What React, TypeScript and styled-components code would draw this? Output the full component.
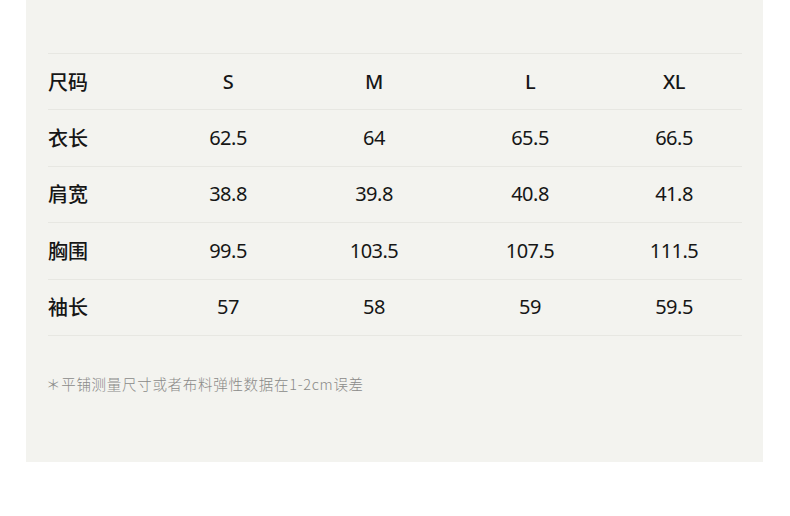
import styled, { createGlobalStyle } from 'styled-components';

const sizes = ['S', 'M', 'L', 'XL'];

const rows: { label: string; values: string[] }[] = [
  { label: '衣长', values: ['62.5', '64', '65.5', '66.5'] },
  { label: '肩宽', values: ['38.8', '39.8', '40.8', '41.8'] },
  { label: '胸围', values: ['99.5', '103.5', '107.5', '111.5'] },
  { label: '袖长', values: ['57', '58', '59', '59.5'] },
];

export default function App() {
  return (
    <>
      <GlobalStyle />
      <Panel>
        <Table>
          <Row>
            <Label>尺码</Label>
            {sizes.map(s => (
              <Cell key={s} $head>{s}</Cell>
            ))}
          </Row>
          {rows.map(r => (
            <Row key={r.label}>
              <Label>{r.label}</Label>
              {r.values.map((v, i) => (
                <Cell key={i}>{v}</Cell>
              ))}
            </Row>
          ))}
        </Table>
        <Note>＊平铺测量尺寸或者布料弹性数据在1-2cm误差</Note>
      </Panel>
    </>
  );
}

const GlobalStyle = createGlobalStyle`
  body {
    margin: 0;
    background: #ffffff;
    font-family: "Noto Sans", "Noto Sans CJK SC", sans-serif;
  }
`;

const Panel = styled.div`
  margin-left: 26px;
  width: 737px;
  height: 462px;
  box-sizing: border-box;
  padding: 53px 0 0 22px;
  background: #f3f3ef;
`;

const Table = styled.div`
  width: 694px;
  border-top: 1px solid #e7e7e2;
`;

const Row = styled.div`
  display: grid;
  grid-template-columns: 120px 120px 172px 140px 148px;
  align-items: center;
  height: 55.4px;
  border-bottom: 1px solid #e7e7e2;
`;

const Label = styled.div`
  font-family: "Noto Sans CJK SC", sans-serif;
  font-size: 20px;
  font-weight: 500;
  color: #161616;
  line-height: 1;
`;

const Cell = styled.div<{ $head?: boolean }>`
  text-align: center;
  font-family: "Noto Sans", sans-serif;
  font-size: 20px;
  font-weight: ${({ $head }) => ($head ? 500 : 400)};
  letter-spacing: -0.5px;
  color: #161616;
  line-height: 1;
`;

const Note = styled.div`
  margin-top: 38px;
  margin-left: -2px;
  font-family: "Noto Sans CJK SC", sans-serif;
  font-size: 14.5px;
  font-weight: 300;
  letter-spacing: 0.7px;
  color: #8a8a88;
  line-height: 20px;
`;
